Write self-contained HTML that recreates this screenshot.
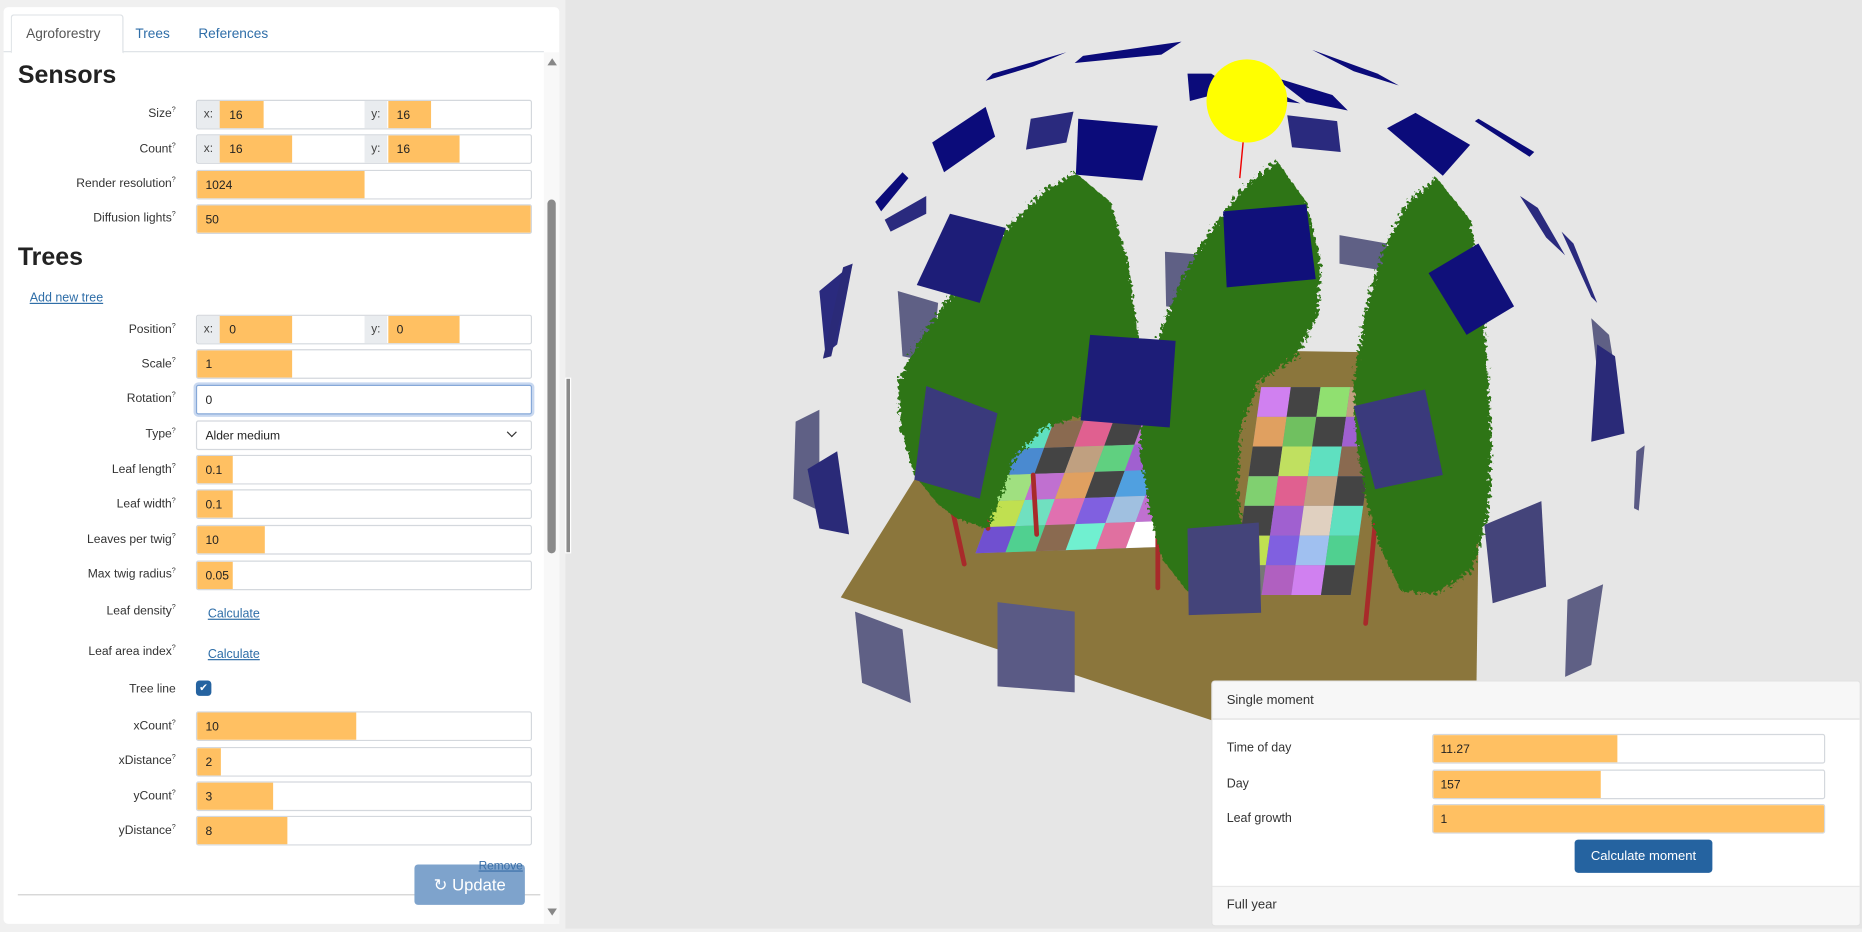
<!DOCTYPE html>
<html><head><meta charset="utf-8">
<style>
html,body{margin:0;padding:0;width:1862px;height:928px;overflow:hidden;background:#f0f0f0;}
#wrap{position:absolute;left:0;top:0;width:1568px;height:782px;transform:scale(1.1875);transform-origin:0 0;font-family:"Liberation Sans",sans-serif;font-size:11px;color:#333;}
.abs{position:absolute;}
#scene{position:absolute;left:476px;top:0;width:1092px;height:782px;background:#e6e6e6;}
#left{position:absolute;left:3px;top:6px;width:468px;height:772px;background:#fff;border-radius:4px;}
.tab{position:absolute;top:8px;height:30px;line-height:30px;font-size:11.5px;color:#2f6ea8;}
.lbl{position:absolute;right:0;width:140px;text-align:right;font-size:10.2px;color:#333;}
.lbl sup{font-size:6px;}
.inp{position:absolute;left:165px;width:281px;height:23px;border:1px solid #d4d8dd;border-radius:2px;background:#fff;overflow:hidden;}
.bar{position:absolute;left:0;top:0;height:23px;background:#ffc062;}
.val{position:absolute;left:7px;top:1px;line-height:23px;font-size:10.2px;color:#222;}
.pre{position:absolute;top:0;width:19px;height:23px;background:#e9ecef;line-height:24px;text-align:center;color:#444;font-size:10px;}
a{color:#2f6ea8;text-decoration:underline;}
</style></head><body>
<div id="wrap">
<div id="scene">
<svg width="1092" height="782" viewBox="476 0 1092 782" xmlns="http://www.w3.org/2000/svg">
<defs>
<filter id="rough" x="-10%" y="-10%" width="120%" height="120%">
<feTurbulence type="fractalNoise" baseFrequency="0.35" numOctaves="2" seed="3"/>
<feDisplacementMap in="SourceGraphic" scale="9"/>
</filter>
</defs>
<g fill="#5f6085">
<polygon points="756,245 790,255 785,305 760,300"/>
<polygon points="981,212 1018,215 1014,262 982,258"/>
<polygon points="1128,198 1168,205 1166,228 1128,222"/>
<polygon points="670,355 690,345 690,430 668,420"/>
<polygon points="1340,268 1355,282 1362,325 1345,313"/>
<polygon points="1320,505 1350,492 1340,560 1318,570"/>
<polygon points="720,515 760,530 767,592 726,575"/>
<polygon points="1108,565 1175,558 1175,575 1108,575"/>
</g>
<g fill="#0b0b7a">
<polygon points="836,62 898,44 870,56 830,68"/>
<polygon points="912,47 995,35 978,46 905,53"/>
<polygon points="1105,42 1160,62 1178,72 1140,60"/>
<polygon points="1073,65 1122,80 1135,93 1100,86"/>
<polygon points="1000,62 1020,62 1040,75 1002,85"/>
<polygon points="1048,60 1080,80 1095,87 1060,83"/>
<polygon points="785,120 830,90 838,115 795,145"/>
<polygon points="908,100 975,106 962,152 906,147"/>
<polygon points="1168,108 1192,95 1238,122 1215,148"/>
<polygon points="1245,100 1292,128 1288,132 1242,102"/>
<polygon points="737,170 760,145 765,150 742,178"/>
</g>
<g fill="#2a2a7e">
<polygon points="868,100 904,94 898,120 864,126"/>
<polygon points="1084,97 1126,102 1129,128 1088,124"/>
<polygon points="745,185 780,165 780,180 750,195"/>
<polygon points="690,245 718,222 705,290 695,298"/>
<polygon points="1280,165 1295,175 1318,215 1302,200"/>
<polygon points="1315,195 1325,205 1345,255 1340,250"/>
</g>
<polygon points="840,292 1247,298 1242,680 708,503" fill="#8b763c"/>
<g transform="translate(862,356) skewX(-22) rotate(-2)">
<rect x="0" y="0" width="175" height="110" fill="#8a8fb0"/>
<rect x="0" y="0" width="25" height="22" fill="#5fe0c0"/><rect x="25" y="0" width="25" height="22" fill="#8a6a50"/><rect x="50" y="0" width="25" height="22" fill="#e06090"/><rect x="75" y="0" width="25" height="22" fill="#444"/><rect x="100" y="0" width="25" height="22" fill="#c070d0"/><rect x="125" y="0" width="25" height="22" fill="#777"/><rect x="150" y="0" width="25" height="22" fill="#70e0c0"/>
<rect x="0" y="22" width="25" height="22" fill="#4a8ad0"/><rect x="25" y="22" width="25" height="22" fill="#444"/><rect x="50" y="22" width="25" height="22" fill="#c0a080"/><rect x="75" y="22" width="25" height="22" fill="#60d080"/><rect x="100" y="22" width="25" height="22" fill="#a060d0"/><rect x="125" y="22" width="25" height="22" fill="#e0a060"/><rect x="150" y="22" width="25" height="22" fill="#444"/>
<rect x="0" y="44" width="25" height="22" fill="#a0e080"/><rect x="25" y="44" width="25" height="22" fill="#c070d0"/><rect x="50" y="44" width="25" height="22" fill="#e0a060"/><rect x="75" y="44" width="25" height="22" fill="#444"/><rect x="100" y="44" width="25" height="22" fill="#50a0e0"/><rect x="125" y="44" width="25" height="22" fill="#8060e0"/><rect x="150" y="44" width="25" height="22" fill="#a0e080"/>
<rect x="0" y="66" width="25" height="22" fill="#c0e050"/><rect x="25" y="66" width="25" height="22" fill="#70e0c0"/><rect x="50" y="66" width="25" height="22" fill="#e070b0"/><rect x="75" y="66" width="25" height="22" fill="#8060e0"/><rect x="100" y="66" width="25" height="22" fill="#a0c0e0"/><rect x="125" y="66" width="25" height="22" fill="#c070d0"/><rect x="150" y="66" width="25" height="22" fill="#e070a0"/>
<rect x="0" y="88" width="25" height="22" fill="#7050d0"/><rect x="25" y="88" width="25" height="22" fill="#50d090"/><rect x="50" y="88" width="25" height="22" fill="#8a6a50"/><rect x="75" y="88" width="25" height="22" fill="#70f0d0"/><rect x="100" y="88" width="25" height="22" fill="#e070a0"/><rect x="125" y="88" width="25" height="22" fill="#fff"/><rect x="150" y="88" width="25" height="22" fill="#f080b0"/>
</g>
<g transform="translate(1062,326) skewX(-8)">
<rect x="0" y="0" width="100" height="175" fill="#7a7fa0"/>
<rect x="0" y="0" width="25" height="25" fill="#d080f0"/><rect x="25" y="0" width="25" height="25" fill="#444"/><rect x="50" y="0" width="25" height="25" fill="#90e070"/><rect x="75" y="0" width="25" height="25" fill="#c0a080"/>
<rect x="0" y="25" width="25" height="25" fill="#e0a060"/><rect x="25" y="25" width="25" height="25" fill="#70c060"/><rect x="50" y="25" width="25" height="25" fill="#444"/><rect x="75" y="25" width="25" height="25" fill="#a060d0"/>
<rect x="0" y="50" width="25" height="25" fill="#444"/><rect x="25" y="50" width="25" height="25" fill="#c0e060"/><rect x="50" y="50" width="25" height="25" fill="#5fe0c0"/><rect x="75" y="50" width="25" height="25" fill="#8a6a50"/>
<rect x="0" y="75" width="25" height="25" fill="#80d070"/><rect x="25" y="75" width="25" height="25" fill="#e06090"/><rect x="50" y="75" width="25" height="25" fill="#c0a080"/><rect x="75" y="75" width="25" height="25" fill="#444"/>
<rect x="0" y="100" width="25" height="25" fill="#444"/><rect x="25" y="100" width="25" height="25" fill="#a060d0"/><rect x="50" y="100" width="25" height="25" fill="#e0d0c0"/><rect x="75" y="100" width="25" height="25" fill="#5fe0c0"/>
<rect x="0" y="125" width="25" height="25" fill="#c0e050"/><rect x="25" y="125" width="25" height="25" fill="#8060e0"/><rect x="50" y="125" width="25" height="25" fill="#a0c0f0"/><rect x="75" y="125" width="25" height="25" fill="#50d090"/>
<rect x="0" y="150" width="25" height="25" fill="#777"/><rect x="25" y="150" width="25" height="25" fill="#b060c0"/><rect x="50" y="150" width="25" height="25" fill="#d080f0"/><rect x="75" y="150" width="25" height="25" fill="#444"/>
</g>
<g stroke="#a82a2a" stroke-width="4" stroke-linecap="round">
<line x1="800" y1="420" x2="812" y2="475"/><line x1="828" y1="410" x2="832" y2="445"/>
<line x1="975" y1="430" x2="975" y2="495"/><line x1="1160" y1="420" x2="1150" y2="525"/>
<line x1="870" y1="400" x2="873" y2="450"/>
</g>
<g fill="#2e7414" filter="url(#rough)">
<polygon points="905,145 935,170 950,220 955,260 962,300 960,335 935,350 905,352 880,360 855,385 842,420 832,445 808,438 790,425 770,400 758,360 756,320 772,290 792,260 820,225 850,190 880,160"/>
<polygon points="1075,135 1100,170 1112,220 1110,265 1092,300 1060,322 1045,360 1042,410 1048,460 1030,500 1000,498 978,470 968,430 960,380 962,330 975,285 995,235 1015,200 1045,160"/>
<polygon points="1210,150 1238,185 1248,240 1252,300 1256,370 1254,430 1240,480 1210,500 1180,498 1162,460 1150,420 1142,370 1140,320 1150,260 1165,210 1185,170"/>
</g>
<g fill="#10107a">
<polygon points="1030,178 1100,172 1108,235 1033,242"/>
<polygon points="1203,230 1245,205 1275,258 1235,282"/>
</g>
<g fill="#1d1d78">
<polygon points="800,180 847,192 825,255 772,240"/>
<polygon points="918,282 990,287 985,360 910,354"/>
</g>
<g fill="#2a2a78">
<polygon points="710,225 718,222 700,300 693,302"/>
<polygon points="680,395 705,380 715,450 690,445"/>
<polygon points="1345,290 1360,300 1368,365 1340,372"/>
</g>
<g fill="#3a3a7c">
<polygon points="780,325 840,348 825,420 770,404"/>
<polygon points="1140,342 1200,328 1215,400 1158,412"/>
</g>
<g fill="#44447a">
<polygon points="1000,445 1060,440 1062,516 1001,518"/>
<polygon points="1250,442 1298,422 1302,494 1257,508"/>
</g>
<g fill="#5a5a85"><polygon points="840,507 905,515 905,583 840,578"/><polygon points="1378,380 1385,375 1380,430 1376,428"/></g>
<line x1="1047" y1="118" x2="1044" y2="150" stroke="#e00" stroke-width="1.2"/>
<ellipse cx="1050" cy="85" rx="34" ry="35" fill="#ffff00"/>
</svg>
</div>
<div class="abs" style="left:472px;top:0;width:4px;height:782px;background:#f0f0f0"></div>
<div class="abs" style="left:476px;top:318px;width:5px;height:148px;background:#fff"></div>
<div class="abs" style="left:477px;top:319px;width:3px;height:146px;background:#8a8a8a"></div>

<div id="left">
  <div class="abs" style="left:0;top:37px;width:455px;height:1px;background:#dee2e6"></div>
  <div class="abs" style="left:6px;top:6px;width:93px;height:31px;border:1px solid #dee2e6;border-bottom:1px solid #fff;border-radius:3px 3px 0 0;background:#fff"></div>
  <div class="tab" style="left:19px;color:#555">Agroforestry</div>
  <div class="tab" style="left:111px">Trees</div>
  <div class="tab" style="left:164px">References</div>
  <div class="abs" style="left:455px;top:38px;width:13px;height:734px;background:#f8f8f8"></div>
  <div class="abs" style="left:458px;top:43px;width:0;height:0;border-left:4px solid transparent;border-right:4px solid transparent;border-bottom:6px solid #888"></div>
  <div class="abs" style="left:458px;top:759px;width:0;height:0;border-left:4px solid transparent;border-right:4px solid transparent;border-top:6px solid #888"></div>
  <div class="abs" style="left:458px;top:162px;width:7px;height:298px;background:#8a8a8a;border-radius:4px"></div>
  <div class="abs" style="left:12px;top:46px;font-size:21px;font-weight:bold;color:#222">Sensors</div>
  <div class="abs" style="left:12px;top:199px;font-size:21px;font-weight:bold;color:#222">Trees</div>
  <div class="abs" style="left:22px;top:239px;font-size:10.5px"><a>Add new tree</a></div>
</div>

<div class="abs" style="left:0;top:0;width:470px;height:782px">
<div class="lbl" style="left:0;width:148px;top:90px">Size<sup>?</sup></div>
<div class="inp" style="top:84px"><div class="pre" style="left:0">x:</div><div class="bar" style="left:19px;width:37px"></div><div class="val" style="left:27px">16</div><div class="pre" style="left:141px">y:</div><div class="bar" style="left:161px;width:36px"></div><div class="val" style="left:168px">16</div></div>
<div class="lbl" style="left:0;width:148px;top:120px">Count<sup>?</sup></div>
<div class="inp" style="top:113px"><div class="pre" style="left:0">x:</div><div class="bar" style="left:19px;width:61px"></div><div class="val" style="left:27px">16</div><div class="pre" style="left:141px">y:</div><div class="bar" style="left:161px;width:60px"></div><div class="val" style="left:168px">16</div></div>
<div class="lbl" style="left:0;width:148px;top:149px">Render resolution<sup>?</sup></div>
<div class="inp" style="top:143px"><div class="bar" style="width:141px"></div><div class="val">1024</div></div>
<div class="lbl" style="left:0;width:148px;top:178px">Diffusion lights<sup>?</sup></div>
<div class="inp" style="top:172px"><div class="bar" style="width:281px"></div><div class="val">50</div></div>

<div class="lbl" style="left:0;width:148px;top:272px">Position<sup>?</sup></div>
<div class="inp" style="top:265px"><div class="pre" style="left:0">x:</div><div class="bar" style="left:19px;width:61px"></div><div class="val" style="left:27px">0</div><div class="pre" style="left:141px">y:</div><div class="bar" style="left:161px;width:60px"></div><div class="val" style="left:168px">0</div></div>
<div class="lbl" style="left:0;width:148px;top:301px">Scale<sup>?</sup></div>
<div class="inp" style="top:294px"><div class="bar" style="width:80px"></div><div class="val">1</div></div>
<div class="lbl" style="left:0;width:148px;top:330px">Rotation<sup>?</sup></div>
<div class="inp" style="top:324px;border-color:#86a8d8;box-shadow:0 0 0 2px #c8d8f0"><div class="val">0</div></div>
<div class="lbl" style="left:0;width:148px;top:360px">Type<sup>?</sup></div>
<div class="inp" style="top:354px"><div class="val">Alder medium</div><div class="abs" style="right:13px;top:6px;width:5px;height:5px;border-right:1.5px solid #333;border-bottom:1.5px solid #333;transform:rotate(45deg)"></div></div>
<div class="lbl" style="left:0;width:148px;top:390px">Leaf length<sup>?</sup></div>
<div class="inp" style="top:383px"><div class="bar" style="width:30px"></div><div class="val">0.1</div></div>
<div class="lbl" style="left:0;width:148px;top:419px">Leaf width<sup>?</sup></div>
<div class="inp" style="top:412px"><div class="bar" style="width:30px"></div><div class="val">0.1</div></div>
<div class="lbl" style="left:0;width:148px;top:449px">Leaves per twig<sup>?</sup></div>
<div class="inp" style="top:442px"><div class="bar" style="width:57px"></div><div class="val">10</div></div>
<div class="lbl" style="left:0;width:148px;top:478px">Max twig radius<sup>?</sup></div>
<div class="inp" style="top:472px"><div class="bar" style="width:30px"></div><div class="val">0.05</div></div>
<div class="lbl" style="left:0;width:148px;top:509px">Leaf density<sup>?</sup></div>
<div class="abs" style="left:175px;top:511px;font-size:10.5px"><a>Calculate</a></div>
<div class="lbl" style="left:0;width:148px;top:543px">Leaf area index<sup>?</sup></div>
<div class="abs" style="left:175px;top:545px;font-size:10.5px"><a>Calculate</a></div>
<div class="lbl" style="left:0;width:148px;top:575px">Tree line</div>
<div class="abs" style="left:165px;top:573px;width:13px;height:13px;background:#2563a0;border-radius:3px;color:#fff;font-size:9px;line-height:13px;text-align:center">✔</div>
<div class="lbl" style="left:0;width:148px;top:606px">xCount<sup>?</sup></div>
<div class="inp" style="top:599px"><div class="bar" style="width:134px"></div><div class="val">10</div></div>
<div class="lbl" style="left:0;width:148px;top:635px">xDistance<sup>?</sup></div>
<div class="inp" style="top:629px"><div class="bar" style="width:20px"></div><div class="val">2</div></div>
<div class="lbl" style="left:0;width:148px;top:665px">yCount<sup>?</sup></div>
<div class="inp" style="top:658px"><div class="bar" style="width:64px"></div><div class="val">3</div></div>
<div class="lbl" style="left:0;width:148px;top:694px">yDistance<sup>?</sup></div>
<div class="inp" style="top:687px"><div class="bar" style="width:76px"></div><div class="val">8</div></div>

<div class="abs" style="left:15px;top:753px;width:440px;height:1px;background:#d0d0d0"></div>
<div class="abs" style="left:349px;top:728px;width:93px;height:34px;background:#7ea3cc;border-radius:3px;color:#fff;font-size:14px;line-height:34px;text-align:center">↻ Update</div>
<div class="abs" style="left:403px;top:724px;font-size:10px"><a style="color:#3a6fa8">Remove</a></div>
</div>

<div class="abs" style="left:1020px;top:573px;width:545px;height:205px;background:#fff;border:1px solid #e2e2e2;border-radius:3px;overflow:hidden">
  <div class="abs" style="left:0;top:0;width:545px;height:31px;background:#f7f7f7;border-bottom:1px solid #e0e0e0"></div>
  <div class="abs" style="left:12px;top:10px;font-size:11px">Single moment</div>
  <div class="abs" style="left:12px;top:50px;font-size:10.5px">Time of day</div>
  <div class="abs" style="left:12px;top:80px;font-size:10.5px">Day</div>
  <div class="abs" style="left:12px;top:109px;font-size:10.5px">Leaf growth</div>
  <div class="inp" style="left:185px;top:44px;width:329px"><div class="bar" style="width:155px"></div><div class="val" style="left:6px">11.27</div></div>
  <div class="inp" style="left:185px;top:74px;width:329px"><div class="bar" style="width:141px"></div><div class="val" style="left:6px">157</div></div>
  <div class="inp" style="left:185px;top:103px;width:329px"><div class="bar" style="width:329px"></div><div class="val" style="left:6px">1</div></div>
  <div class="abs" style="left:305px;top:133px;width:116px;height:28px;background:#2563a0;border-radius:3px;color:#fff;font-size:11px;line-height:28px;text-align:center">Calculate moment</div>
  <div class="abs" style="left:0;top:172px;width:545px;height:33px;background:#f7f7f7;border-top:1px solid #e8e8e8"></div>
  <div class="abs" style="left:12px;top:182px;font-size:11px">Full year</div>
</div>
</div>
</body></html>
